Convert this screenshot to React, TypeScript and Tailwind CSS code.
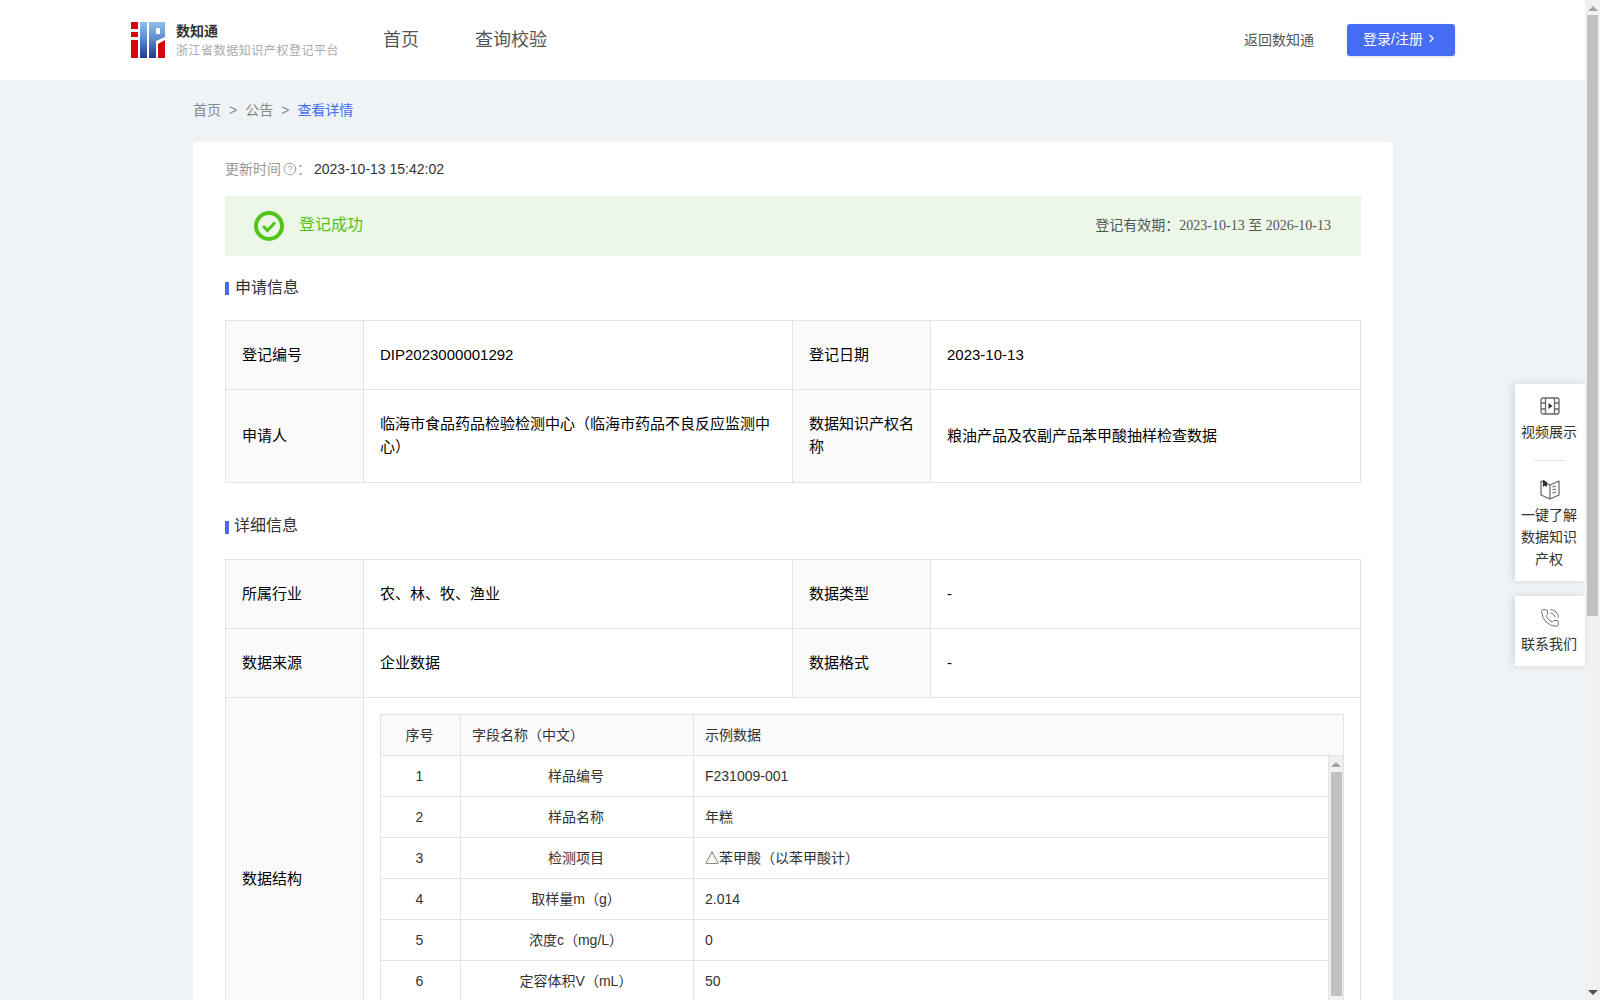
import { ChevronRight, CircleHelp, PhoneCall } from "lucide-react";

const fieldRows = [
  ["1", "样品编号", "F231009-001"],
  ["2", "样品名称", "年糕"],
  ["3", "检测项目", "△苯甲酸（以苯甲酸计）"],
  ["4", "取样量m（g）", "2.014"],
  ["5", "浓度c（mg/L）", "0"],
  ["6", "定容体积V（mL）", "50"],
];

const labelCell = "border border-[#e3e3e3] bg-[#fafafa] px-4 pb-[2px] align-middle leading-[23px] text-black";
const valueCell = "border border-[#e3e3e3] px-4 pb-[2px] align-middle leading-[23px] text-black";

const Logo = () => (
  <svg width="34" height="36" viewBox="0 0 34 36" className="shrink-0">
    <defs>
      <linearGradient id="logoBlue" x1="0" y1="0" x2="0" y2="1">
        <stop offset="0" stopColor="#8fc0ea" />
        <stop offset="0.45" stopColor="#5c8fcf" />
        <stop offset="1" stopColor="#1f3a8c" />
      </linearGradient>
    </defs>
    <rect x="0" y="0" width="7" height="7" fill="#d4050c" />
    <rect x="0" y="10" width="7" height="5" fill="#d4050c" />
    <rect x="0" y="18" width="7" height="18" fill="#d4050c" />
    <rect x="9" y="0" width="7" height="36" fill="url(#logoBlue)" />
    <path d="M18 0H34V15L25 19V36H18Z" fill="url(#logoBlue)" />
    <rect x="25" y="6" width="4" height="6" fill="#ffffff" />
    <path d="M27 22L34 18V36H27Z" fill="#d4050c" />
  </svg>
);

const VideoIcon = () => (
  <svg width="20" height="18" viewBox="0 0 20 18" fill="none" stroke="#666" strokeWidth="1.3">
    <rect x="1" y="1" width="18" height="16" rx="2" />
    <path d="M5.5 1V17M14.5 1V17M1 6H5.5M1 12H5.5M14.5 6H19M14.5 12H19" />
    <path d="M8.5 6L12.5 9L8.5 12Z" fill="#333" stroke="none" />
  </svg>
);

const BookIcon = () => (
  <svg width="20" height="21" viewBox="0 0 20 21" fill="none" stroke="#666" strokeWidth="1.2">
    <path d="M1 2V16L10 20L19 16V2L10 6Z" strokeLinejoin="round" />
    <path d="M3.5 1V7L5 6L6.5 7V3" fill="#333" stroke="#333" />
    <path d="M10 6V20M12.5 8L16 7M12.5 11L16 10M12.5 14L16 13" />
  </svg>
);

const Scrollbar = ({ thumb }: { thumb: string }) => (
  <div className="flex h-full w-full flex-col items-center bg-[#f1f1f1]">
    <div className="mt-[6px] h-0 w-0 border-x-[5px] border-b-[5px] border-x-transparent border-b-[#a3a3a3]" />
    <div className={thumb} />
  </div>
);

export default function App() {
  return (
    <div className="relative flex h-screen overflow-hidden bg-[#eff3f6] font-['Liberation_Sans','Noto_Sans_CJK_SC',sans-serif]">
      <div className="w-[1585px] shrink-0">
        <header className="flex h-20 items-center justify-between bg-white pl-[131px] pr-[130px]">
          <div className="flex items-center">
            <Logo />
            <div className="ml-[11px] w-[197px] pt-[2px]">
              <div className="text-sm font-bold leading-[18px] text-[#333]">数知通</div>
              <div className="mt-[2px] text-xs leading-[18px] tracking-[0.55px] text-[#aaa]">浙江省数据知识产权登记平台</div>
            </div>
            <nav className="ml-[10px] flex gap-[56px] text-lg text-[#555]">
              <span>首页</span>
              <span>查询校验</span>
            </nav>
          </div>
          <div className="flex items-center gap-[33px]">
            <span className="text-sm text-[#555]">返回数知通</span>
            <button className="flex h-8 w-[108px] items-center gap-[2px] rounded-[3px] bg-[#456cf4] pb-[3px] pl-4 text-sm text-white shadow-sm">
              登录/注册
              <ChevronRight size={13} strokeWidth={2} />
            </button>
          </div>
        </header>

        <main className="ml-[193px] w-[1200px]">
          <div className="flex h-[62px] items-center gap-[8px] pb-[2px] text-sm text-[#888]">
            <span>首页</span>
            <span>&gt;</span>
            <span>公告</span>
            <span>&gt;</span>
            <span className="text-[#3f6ef5]">查看详情</span>
          </div>

          <section className="rounded bg-white px-8 pb-8">
            <div className="flex h-[54px] items-center text-sm">
              <span className="text-[#999]">更新时间</span>
              <CircleHelp size={14} strokeWidth={1.5} className="ml-[2px] text-[#999]" />
              <span className="text-[#999]">：</span>
              <span className="ml-[3px] text-[#333]">2023-10-13 15:42:02</span>
            </div>

            <div className="flex h-[60px] items-center justify-between bg-[#ecf7e8] pl-[29px] pr-[30px]">
              <div className="flex items-center gap-[15px]">
                <svg width="30" height="30" viewBox="0 0 30 30" fill="none">
                  <circle cx="15" cy="15" r="13" stroke="#52c41a" strokeWidth="4" />
                  <path d="M9 15L13.5 19.5L21 11.5" stroke="#52c41a" strokeWidth="3" />
                </svg>
                <span className="pb-[2px] text-base text-[#52c41a]">登记成功</span>
              </div>
              <div className="pb-[2px] text-sm text-[#555]">
                登记有效期：<span className="font-['Liberation_Serif','Noto_Sans_CJK_SC',serif]">2023-10-13 至 2026-10-13</span>
              </div>
            </div>

            <h3 className="flex h-[64px] items-center gap-[6px] text-base font-normal text-[#333]">
              <span className="mt-[1px] h-[13px] w-1 bg-[#456cf4]" />
              申请信息
            </h3>

            <table className="w-[1135px] table-fixed border-collapse text-[15px]">
              <colgroup>
                <col className="w-[138px]" />
                <col className="w-[429px]" />
                <col className="w-[138px]" />
                <col className="w-[430px]" />
              </colgroup>
              <tbody>
                <tr className="h-[69px]">
                  <td className={labelCell}>登记编号</td>
                  <td className={valueCell}>DIP2023000001292</td>
                  <td className={labelCell}>登记日期</td>
                  <td className={valueCell}>2023-10-13</td>
                </tr>
                <tr className="h-[93px]">
                  <td className={labelCell}>申请人</td>
                  <td className={valueCell}>临海市食品药品检验检测中心（临海市药品不良反应监测中心）</td>
                  <td className={labelCell}>数据知识产权名称</td>
                  <td className={valueCell}>粮油产品及农副产品苯甲酸抽样检查数据</td>
                </tr>
              </tbody>
            </table>

            <h3 className="flex h-[76px] items-center gap-[5px] pt-[10px] text-base font-normal text-[#333]">
              <span className="mt-[2px] h-[13px] w-1 bg-[#456cf4]" />
              详细信息
            </h3>

            <table className="w-[1135px] table-fixed border-collapse text-[15px]">
              <colgroup>
                <col className="w-[138px]" />
                <col className="w-[429px]" />
                <col className="w-[138px]" />
                <col className="w-[430px]" />
              </colgroup>
              <tbody>
                <tr className="h-[69px]">
                  <td className={labelCell}>所属行业</td>
                  <td className={valueCell}>农、林、牧、渔业</td>
                  <td className={labelCell}>数据类型</td>
                  <td className={valueCell}>-</td>
                </tr>
                <tr className="h-[69px]">
                  <td className={labelCell}>数据来源</td>
                  <td className={valueCell}>企业数据</td>
                  <td className={labelCell}>数据格式</td>
                  <td className={valueCell}>-</td>
                </tr>
                <tr className="h-[362px]">
                  <td className={labelCell}>数据结构</td>
                  <td colSpan={3} className="border border-[#e3e3e3] p-4 align-top">
                    <div className="w-[964px] border border-[#e3e3e3] text-sm text-[#333]">
                      <div className="grid h-[41px] grid-cols-[80px_233px_1fr] items-center border-b border-[#e3e3e3] bg-[#fafafa]">
                        <span className="flex h-full items-center justify-center border-r border-[#e3e3e3] pr-[2px]">序号</span>
                        <span className="flex h-full items-center border-r border-[#e3e3e3] pl-[11px]">字段名称（中文）</span>
                        <span className="pl-[11px]">示例数据</span>
                      </div>
                      <div className="flex h-[288px]">
                        <div className="flex-1 border-r border-[#e3e3e3]">
                          {fieldRows.map((row) => (
                            <div key={row[0]} className="grid h-[41px] grid-cols-[80px_233px_1fr] items-center border-b border-[#e3e3e3]">
                              <span className="flex h-full items-center justify-center border-r border-[#e3e3e3] pr-[2px]">{row[0]}</span>
                              <span className="flex h-full items-center justify-center border-r border-[#e3e3e3] pr-[2px]">{row[1]}</span>
                              <span className="pl-[11px]">{row[2]}</span>
                            </div>
                          ))}
                        </div>
                        <div className="w-[14px] shrink-0">
                          <Scrollbar thumb="mt-[5px] h-[224px] w-[11px] bg-[#c1c1c1]" />
                        </div>
                      </div>
                    </div>
                  </td>
                </tr>
              </tbody>
            </table>
          </section>
        </main>
      </div>

      <div className="flex w-[15px] shrink-0 flex-col">
        <div className="relative h-full">
          <Scrollbar thumb="mt-[4px] h-[601px] w-[11px] bg-[#c1c1c1]" />
          <div className="absolute bottom-[5px] left-[3px] h-0 w-0 border-x-[5px] border-t-[5px] border-x-transparent border-t-[#505050]" />
        </div>
      </div>

      {/* floating side tools */}
      <div className="absolute left-[1515px] top-[384px] flex w-[70px] flex-col gap-[15px] text-center text-sm leading-[22px] text-[#333]">
        <div className="bg-white shadow-[-2px_0_8px_rgba(0,0,0,0.12)]">
          <div className="flex flex-col items-center pb-[17px] pt-[13px]">
            <VideoIcon />
            <div className="mt-[6px] pr-[2px]">视频展示</div>
          </div>
          <div className="mx-auto h-px w-8 bg-[#e3e3e3]" />
          <div className="flex flex-col items-center px-[6px] pb-[11px] pt-[18px]">
            <BookIcon />
            <div className="mt-[4px] pr-[2px]">一键了解数据知识产权</div>
          </div>
        </div>
        <div className="flex h-[70px] flex-col items-center bg-white pt-[12px] shadow-[-2px_0_8px_rgba(0,0,0,0.12)]">
          <PhoneCall size={20} strokeWidth={1} className="text-[#555]" />
          <div className="mt-[5px] pr-[2px]">联系我们</div>
        </div>
      </div>
    </div>
  );
}
